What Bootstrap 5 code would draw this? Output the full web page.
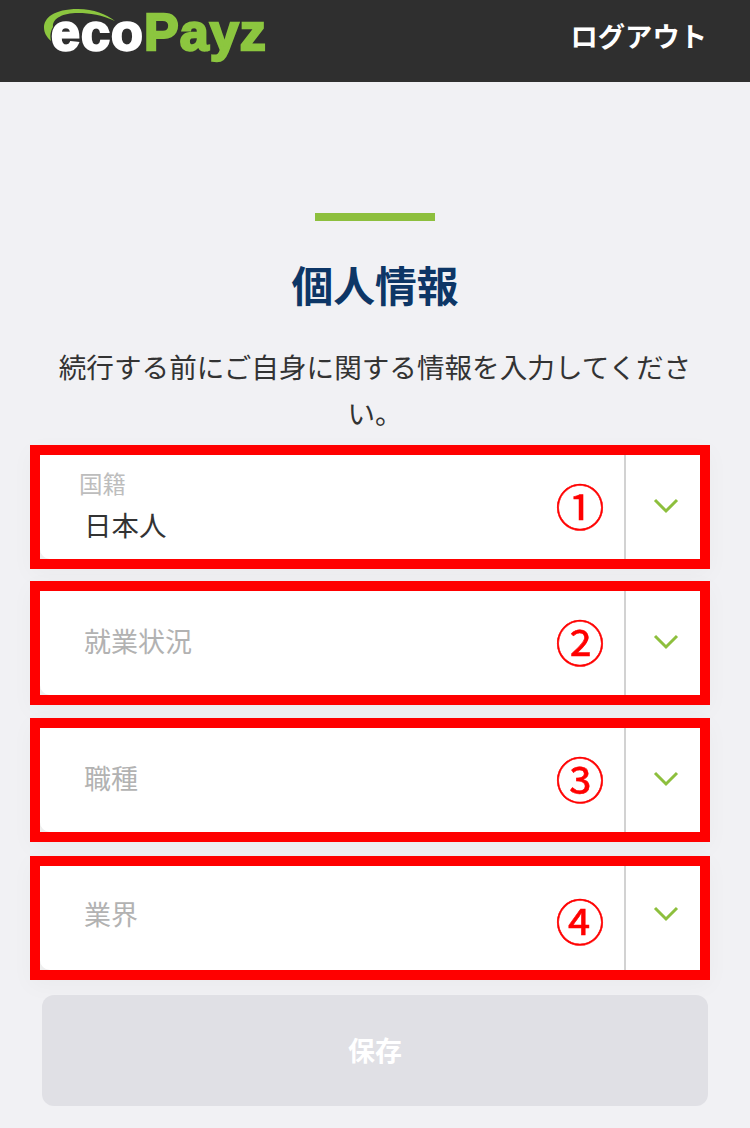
<!DOCTYPE html>
<html lang="ja"><head><meta charset="utf-8">
<link rel="stylesheet" href="https://cdn.jsdelivr.net/npm/bootstrap@5.3.0/dist/css/bootstrap.min.css">
<style>
html,body{height:1128px;overflow:hidden}
body{background:#f1f1f4;font-family:"Noto Sans CJK JP","Liberation Sans",sans-serif;color:#333}
.topbar{height:82px;background:#2f2f2f;padding:0 43px 0 42px}
.logo-box{position:relative;width:226px;height:64px;margin-top:-18px}
.logo-arc{position:absolute;left:0;top:0}
.logo-word{position:absolute;left:9px;top:4px;font:700 52px/56px "Liberation Sans",sans-serif;letter-spacing:1.1px;color:#8cc63f;-webkit-text-stroke:2.4px currentColor;white-space:nowrap}
.logo-word b{color:#fff;font-weight:700}
.logout{color:#fff;font-size:27.3px;font-weight:700;line-height:1;margin-top:-11px}
.rule{width:120px;height:8px;background:#8dbf3d;margin:131px auto 0}
.page-title{font-size:41.8px;font-weight:700;color:#0d3666;line-height:60px;margin:33px 0 0;text-align:center}
.intro{font-size:27.6px;line-height:46px;margin:29px 40px 0;text-align:center;color:#333;height:92px}
.frames{margin-top:10px}
.frame{border:10px solid #f00;height:124px;margin:0 40px 0 30px;background:#eee;box-shadow:0 6px 22px rgba(0,0,0,.03);display:flex}
.frame + .frame{margin-top:12px}
.frame:nth-child(3){margin-top:13px}
.frame:nth-child(4){margin-top:14px}
.field{flex:1;background:#fff;border-bottom-left-radius:10px;min-width:0;display:flex;align-items:center;justify-content:space-between;padding:0 19px 0 44px}
.ph{font-size:27px;color:#b2b2b2;line-height:1;padding-bottom:6px}
.frame:nth-child(4) .ph{padding-bottom:10px}
.stack{margin-left:-5px;padding-bottom:4px}
.mini{display:block;font-size:23.5px;color:#bdbdbd;line-height:1;margin-bottom:16px}
.val{display:block;font-size:27.5px;color:#333;line-height:1;margin-left:5px}
.num{font:400 49px/50px "Noto Sans CJK JP",sans-serif;color:#f00;width:50px;text-align:center;padding-bottom:4px;-webkit-text-stroke:.5px currentColor}
.frame:nth-child(4) .num{padding:3px 0 0}
.caret{width:76px;background:#fff;border-left:2px solid #d2d2d2;display:flex;align-items:center;justify-content:center;padding-left:5px}
.frame:nth-child(4) .caret svg{margin-bottom:8px}
.caret svg{display:block;margin-bottom:2px}
.save{display:block;width:666px;height:111px;margin:15px 0 0 42px;background:#e0e0e5;border:0;border-radius:12px;color:#fff;font-size:27px;font-weight:700}
</style></head><body>
<header class="topbar d-flex align-items-center justify-content-between">
<div class="logo-box">
<div class="logo-word"><b>eco</b>Payz</div>
<svg class="logo-arc" width="120" height="50" viewBox="0 0 120 50"><path d="M9 41C-4 30-1 9 36 9 52 9 64 14 73 21 60 15 48 13 36 13 20 13 10 19 11 27 8 32 8 37 9 41Z" fill="#8cc63f"/></svg>
</div>
<div class="logout">ログアウト</div>
</header>
<div class="rule"></div>
<h1 class="page-title">個人情報</h1>
<p class="intro">続行する前にご自身に関する情報を入力してください。</p>
<div class="frames">
<div class="frame"><div class="field"><div class="stack"><span class="mini">国籍</span><span class="val">日本人</span></div><span class="num">①</span></div><div class="caret"><svg width="26" height="16" viewBox="0 0 26 16"><path d="M2 2l11 11L24 2" fill="none" stroke="#8dbf3d" stroke-width="3"/></svg></div></div>
<div class="frame"><div class="field"><span class="ph">就業状況</span><span class="num">②</span></div><div class="caret"><svg width="26" height="16" viewBox="0 0 26 16"><path d="M2 2l11 11L24 2" fill="none" stroke="#8dbf3d" stroke-width="3"/></svg></div></div>
<div class="frame"><div class="field"><span class="ph">職種</span><span class="num">③</span></div><div class="caret"><svg width="26" height="16" viewBox="0 0 26 16"><path d="M2 2l11 11L24 2" fill="none" stroke="#8dbf3d" stroke-width="3"/></svg></div></div>
<div class="frame"><div class="field"><span class="ph">業界</span><span class="num">④</span></div><div class="caret"><svg width="26" height="16" viewBox="0 0 26 16"><path d="M2 2l11 11L24 2" fill="none" stroke="#8dbf3d" stroke-width="3"/></svg></div></div>
</div>
<button class="save" type="button">保存</button>
<script src="https://cdn.jsdelivr.net/npm/bootstrap@5.3.0/dist/js/bootstrap.bundle.min.js"></script>
</body></html>
